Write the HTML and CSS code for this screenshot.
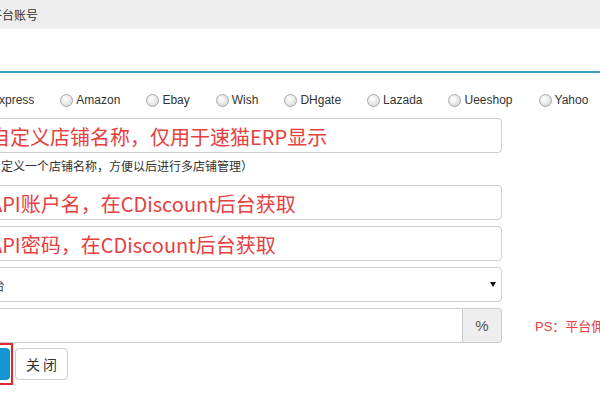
FILE: index.html
```html
<!DOCTYPE html>
<html lang="zh-CN">
<head>
<meta charset="utf-8">
<title>添加平台账号</title>
<link rel="stylesheet" href="styles.css">
</head>
<body>
<div class="page">
  <div class="header"><span class="title">添加平台账号</span></div>
  <div class="tabs"></div>
  <div class="platforms">
    <label class="opt"><span class="radio"></span>Aliexpress</label>
    <label class="opt"><span class="radio"></span>Amazon</label>
    <label class="opt"><span class="radio"></span>Ebay</label>
    <label class="opt"><span class="radio"></span>Wish</label>
    <label class="opt"><span class="radio"></span>DHgate</label>
    <label class="opt"><span class="radio"></span>Lazada</label>
    <label class="opt"><span class="radio"></span>Ueeshop</label>
    <label class="opt"><span class="radio"></span>Yahoo</label>
  </div>
  <form class="form">
    <div class="field with-help">
      <input class="ctl" type="text" placeholder="自定义店铺名称，仅用于速猫ERP显示">
      <p class="help">（自定义一个店铺名称，方便以后进行多店铺管理）</p>
    </div>
    <div class="field">
      <input class="ctl" type="text" placeholder="API账户名，在CDiscount后台获取">
    </div>
    <div class="field">
      <input class="ctl" type="text" placeholder="API密码，在CDiscount后台获取">
    </div>
    <div class="field">
      <div class="select"><span class="select-text">选择站点平台</span></div>
    </div>
    <div class="field row">
      <div class="group">
        <input class="ctl grp-input" type="text">
        <span class="addon">%</span>
      </div>
      <span class="ps">PS：平台佣金比例，用于计算利润</span>
    </div>
    <div class="actions">
      <span class="hl"><button type="button" class="btn btn-primary">保存</button></span>
      <button type="button" class="btn btn-default">关 闭</button>
    </div>
  </form>
</div>
</body>
</html>
```

FILE: styles.css
```css
html, body {
  margin: 0;
  padding: 0;
  background: #ffffff;
  overflow: hidden;
  width: 600px;
  height: 400px;
}

body {
  font-family: "Liberation Sans", "Noto Sans CJK SC", sans-serif;
  color: #333333;
}

.page {
  margin-left: -40px;
  width: 640px;
}

.header {
  height: 29px;
  line-height: 29px;
  background: #eeeeee;
  padding-left: 6px;
  font-size: 12px;
  color: #333333;
  font-family: "Noto Sans CJK SC", sans-serif;
}

.tabs {
  height: 42px;
  border-bottom: 2px solid #3c9dc1;
}

.platforms {
  display: flex;
  align-items: center;
  gap: 26px;
  padding: 19px 0 10px 3px;
  height: 16px;
  font-size: 12px;
  line-height: 16px;
  color: #333333;
  white-space: nowrap;
}

.opt {
  display: flex;
  align-items: center;
}

.radio {
  width: 11px;
  height: 11px;
  border: 1px solid #a8a8a8;
  border-radius: 50%;
  margin-right: 3px;
  background: radial-gradient(circle at 40% 35%, #ffffff 0%, #e6e6e6 55%, #cfcfcf 100%);
}

.form {
  padding-left: 20px;
  width: 600px;
}

.field {
  margin-bottom: 6px;
}

.field.with-help {
  margin-bottom: 0;
}

.ctl {
  display: block;
  box-sizing: border-box;
  width: 522px;
  height: 35px;
  margin: 0;
  padding: 2px 12px 0 9px;
  border: 1px solid #cccccc;
  border-radius: 4px;
  background: #ffffff;
  font-family: "Noto Sans CJK SC", sans-serif;
  font-size: 20px;
  color: #333333;
  outline: none;
}

.ctl::placeholder {
  color: #e6403f;
  opacity: 1;
}

.help {
  margin: 0 0 0 -3px;
  height: 28px;
  padding-top: 4px;
  font-size: 12px;
  line-height: 17px;
  color: #333333;
  font-family: "Noto Sans CJK SC", sans-serif;
  white-space: nowrap;
}

.select {
  position: relative;
  box-sizing: border-box;
  width: 522px;
  height: 35px;
  border: 1px solid #cccccc;
  border-radius: 4px;
  overflow: hidden;
  font-size: 13px;
  line-height: 33px;
  color: #555555;
  font-family: "Noto Sans CJK SC", sans-serif;
  white-space: nowrap;
}

.select-text {
  display: inline-block;
  margin-left: -54px;
}

.select::after {
  content: "";
  position: absolute;
  right: 5px;
  top: 14px;
  border-left: 3px solid transparent;
  border-right: 3px solid transparent;
  border-top: 5px solid #111111;
}

.row {
  display: flex;
  align-items: center;
  margin-bottom: 0;
}

.group {
  display: flex;
  width: 522px;
}

.grp-input {
  width: 483px;
  border-radius: 4px 0 0 4px;
}

.addon {
  box-sizing: border-box;
  width: 39px;
  height: 35px;
  line-height: 33px;
  text-align: center;
  border: 1px solid #cccccc;
  border-left: none;
  border-radius: 0 4px 4px 0;
  background: #eeeeee;
  color: #555555;
  font-size: 15px;
}

.ps {
  margin-left: 33px;
  font-size: 13px;
  color: #e6403f;
  white-space: nowrap;
  font-family: "Liberation Sans", "Noto Sans CJK SC", sans-serif;
}

.actions {
  display: flex;
  align-items: flex-start;
  gap: 2px;
  margin-left: -25px;
}

.hl {
  display: inline-block;
  border: 2px solid #e02626;
  padding: 3px 1px;
}

.btn {
  display: block;
  box-sizing: border-box;
  height: 32px;
  margin: 0;
  border-radius: 4px;
  font-family: "Noto Sans CJK SC", sans-serif;
  font-size: 14px;
  cursor: pointer;
}

.btn-primary {
  width: 52px;
  border: 1px solid #0f8fca;
  background: #1398d5;
  color: #ffffff;
}

.btn-default {
  width: 53px;
  margin-top: 5px;
  border: 1px solid #cccccc;
  background: #ffffff;
  color: #333333;
  padding: 0;
}
```
